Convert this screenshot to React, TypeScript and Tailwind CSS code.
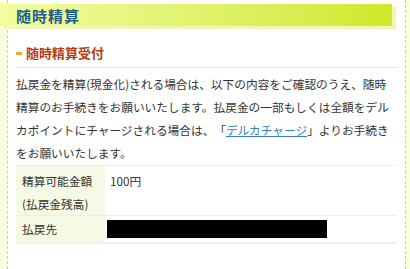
export default function App() {
  return (
    <div
      className="w-[410px] h-[269px] bg-[#fafcdc] overflow-hidden"
      style={{ fontFamily: '"Noto Sans CJK JP", "Noto Sans", sans-serif' }}
    >
      <div className="ml-[7px] mr-[4px] h-full bg-white border-l border-r border-dashed border-[#c9c9c9] pt-[4px]">
        {/* page heading */}
        <div className="-ml-[8px] mr-[13px] h-[22px] flex items-center pl-[16px] bg-gradient-to-r from-[#f2fd9c] to-[#d0e824] shadow-[4px_3px_0_#eef7b4]">
          <h1 className="text-[15px] font-bold tracking-[1px] text-[#1f5f8b] leading-none">随時精算</h1>
        </div>

        <div className="pl-[8px] pr-[8px]">
          <div className="mt-[18px] flex items-center gap-[4px] pb-[5px] border-b border-[#f1e9d6]">
            <span className="w-[6px] h-[3px] bg-[#f4a640]" />
            <h2 className="text-[13px] font-bold text-[#b63c14] leading-[18px]">随時精算受付</h2>
          </div>

          <p className="mt-[3.5px] text-[11.7px] leading-[23px] text-[#333] [text-spacing-trim:space-all]">
            払戻金を精算(現金化)される場合は、以下の内容をご確認のうえ、随時精算のお手続きをお願いいたします。払戻金の一部もしくは全額をデルカポイントにチャージされる場合は、「
            <a className="text-[#2f7fc1] underline">デルカチャージ</a>
            」よりお手続きをお願いいたします。
          </p>

          <table className="mt-[1px] w-full border-collapse text-[11.7px] text-[#333]">
            <tbody>
              <tr className="border-t border-b border-[#f0efe4]">
                <th className="w-[89px] h-[49px] bg-[#f6f9e4] text-left font-normal align-top pl-[6px] pt-[3px] leading-[23px]">
                  精算可能金額
                  <br />
                  (払戻金残高)
                </th>
                <td className="align-top pl-[5px] pt-[3px] leading-[23px]">100円</td>
              </tr>
              <tr className="border-b-2 border-[#f0f0ee]">
                <th className="w-[89px] h-[28px] bg-[#f6f9e4] text-left font-normal pl-[6px] leading-[23px]">
                  払戻先
                </th>
                <td className="pl-[2px]">
                  <div className="w-[220px] h-[18px] bg-black" />
                </td>
              </tr>
            </tbody>
          </table>
        </div>
      </div>
    </div>
  )
}
